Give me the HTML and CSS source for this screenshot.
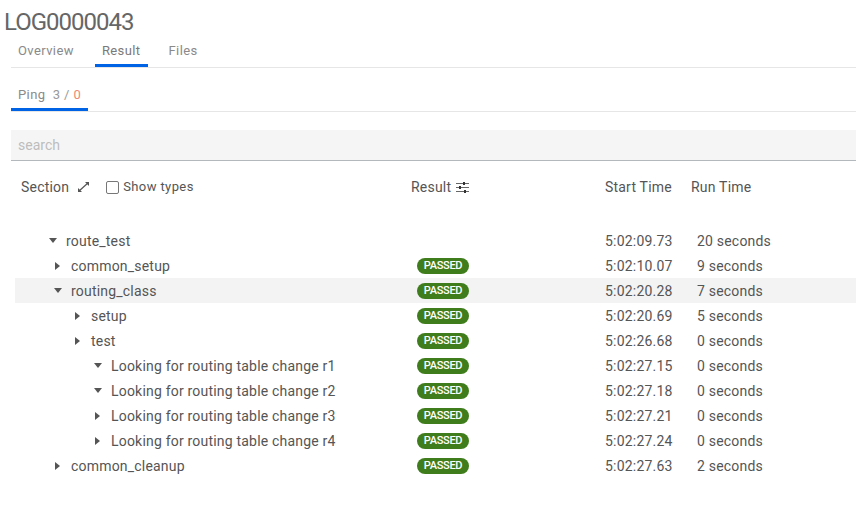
FILE: index.html
```html
<!DOCTYPE html>
<html>
<head>
<meta charset="utf-8">
<link rel="stylesheet" href="styles.css">
</head>
<body>
<h1 class="title">LOG0000043</h1>
<div class="tabs">
  <div class="tab">Overview</div>
  <div class="tab active">Result</div>
  <div class="tab">Files</div>
</div>
<div class="subtabs">
  <div class="tab active">Ping&nbsp; <span class="cnt">3 / </span><span class="fail">0</span></div>
</div>
<div class="search">search</div>
<div class="grid head">
  <div class="hsec">Section
    <svg class="expand" width="13" height="12" viewBox="0 0 13 12"><path d="M1.5 10.5 L11.5 1.5" stroke="#555" stroke-width="1.2"/><path d="M8 1 L12 1 L12 5 Z" fill="#555"/><path d="M1 7 L1 11 L5 11 Z" fill="#555"/></svg>
    <span class="chk"></span><span class="types">Show types</span>
  </div>
  <div>Result
    <svg class="sliders" width="13" height="11" viewBox="0 0 13 11"><g stroke="#666" stroke-width="1"><path d="M0 1.5H13M0 5.5H13M0 9.5H13"/></g><g fill="#333"><rect x="7" y="0" width="2" height="3"/><rect x="3" y="4" width="2" height="3"/><rect x="8" y="8" width="2" height="3"/></g></svg>
  </div>
  <div>Start Time</div>
  <div class="hrun">Run Time</div>
</div>
<div class="rows">
  <div class="grid row"><div class="sec lvl0"><span class="arr down"></span>route_test</div><div></div><div>5:02:09.73</div><div class="run">20 seconds</div></div>
  <div class="grid row"><div class="sec lvl1"><span class="arr right"></span>common_setup</div><div><span class="badge">PASSED</span></div><div>5:02:10.07</div><div class="run">9 seconds</div></div>
  <div class="grid row hl"><div class="sec lvl1"><span class="arr down"></span>routing_class</div><div><span class="badge">PASSED</span></div><div>5:02:20.28</div><div class="run">7 seconds</div></div>
  <div class="grid row"><div class="sec lvl2"><span class="arr right"></span>setup</div><div><span class="badge">PASSED</span></div><div>5:02:20.69</div><div class="run">5 seconds</div></div>
  <div class="grid row"><div class="sec lvl2"><span class="arr right"></span>test</div><div><span class="badge">PASSED</span></div><div>5:02:26.68</div><div class="run">0 seconds</div></div>
  <div class="grid row"><div class="sec lvl3"><span class="arr down"></span>Looking for routing table change r1</div><div><span class="badge">PASSED</span></div><div>5:02:27.15</div><div class="run">0 seconds</div></div>
  <div class="grid row"><div class="sec lvl3"><span class="arr down"></span>Looking for routing table change r2</div><div><span class="badge">PASSED</span></div><div>5:02:27.18</div><div class="run">0 seconds</div></div>
  <div class="grid row"><div class="sec lvl3"><span class="arr right"></span>Looking for routing table change r3</div><div><span class="badge">PASSED</span></div><div>5:02:27.21</div><div class="run">0 seconds</div></div>
  <div class="grid row"><div class="sec lvl3"><span class="arr right"></span>Looking for routing table change r4</div><div><span class="badge">PASSED</span></div><div>5:02:27.24</div><div class="run">0 seconds</div></div>
  <div class="grid row"><div class="sec lvl1"><span class="arr right"></span>common_cleanup</div><div><span class="badge">PASSED</span></div><div>5:02:27.63</div><div class="run">2 seconds</div></div>
</div>
</body>
</html>
```

FILE: styles.css
```css
html, body {
  margin: 0;
  padding: 0;
  background: #fff;
  font-family: Roboto, "Liberation Sans", sans-serif;
  color: #555;
}
.title {
  margin: 0;
  padding: 8px 0 0 4px;
  font-size: 24px;
  line-height: 28px;
  font-weight: 400;
  letter-spacing: -1px;
  color: #666;
}
.tabs {
  display: flex;
  gap: 14px;
  margin: 0 0 0 11px;
  border-bottom: 1px solid #e6e6e6;
}
.tab {
  padding: 6px 7px 5px;
  font-size: 13px;
  line-height: 17px;
  letter-spacing: 0.4px;
  color: #8a8a8a;
  border-bottom: 3px solid transparent;
}
.tab.active {
  color: #7a7a7a;
  border-bottom-color: #0063e5;
}
.subtabs {
  display: flex;
  margin: 12px 0 0 11px;
  border-bottom: 1px solid #e6e6e6;
}
.subtabs .tab {
  color: #8a8a8a;
  padding: 6px 7px 5px;
}
.cnt { color: #9a9a9a; }
.fail { color: #ec8a78; }
.search {
  margin: 18px 0 0 11px;
  height: 30px;
  line-height: 30px;
  padding-left: 7px;
  background: #f5f5f5;
  border-bottom: 1px solid #b3b8bd;
  font-size: 14px;
  color: #bdbdbd;
}
.grid {
  display: grid;
  grid-template-columns: 396px 194px 86px 1fr;
  align-items: center;
  margin-left: 15px;
  letter-spacing: 0.2px;
}
.head {
  margin-top: 16px;
  height: 20px;
  font-size: 14px;
  color: #555;
}
.hsec {
  padding-left: 6px;
  display: flex;
  align-items: center;
}
.expand { margin-left: 8px; }
.chk {
  display: inline-block;
  width: 11px;
  height: 11px;
  border: 1px solid #777;
  border-radius: 2px;
  margin-left: 16px;
  margin-right: 4px;
}
.types { font-size: 13px; position: relative; top: -1px; letter-spacing: 0.4px; }
.sliders { margin-left: 1px; vertical-align: -1px; }
.rows { margin-top: 31px; }
.row {
  height: 25px;
  font-size: 14px;
  color: #555;
}
.row > div { white-space: nowrap; }
.row.hl { background: #f3f3f3; }
.sec { display: flex; align-items: center; }
.lvl0 { padding-left: 33px; }
.lvl1 { padding-left: 38px; }
.lvl2 { padding-left: 58px; }
.lvl3 { padding-left: 78px; }
.arr {
  width: 9px;
  height: 9px;
  margin-right: 9px;
  display: flex;
  align-items: center;
  justify-content: center;
  flex: none;
}
.arr.down::before {
  content: "";
  border-left: 4.5px solid transparent;
  border-right: 4.5px solid transparent;
  border-top: 5px solid #555;
}
.arr.right::before {
  content: "";
  border-top: 4.5px solid transparent;
  border-bottom: 4.5px solid transparent;
  border-left: 5px solid #555;
}
.badge {
  display: inline-block;
  margin-left: 6px;
  width: 52px;
  height: 16px;
  line-height: 16px;
  border-radius: 8px;
  background: #3f7d1c;
  color: #fff;
  font-size: 11px;
  font-weight: 500;
  text-align: center;
  vertical-align: middle;
  letter-spacing: -0.3px;
}
.run { padding-left: 6px; }
```
